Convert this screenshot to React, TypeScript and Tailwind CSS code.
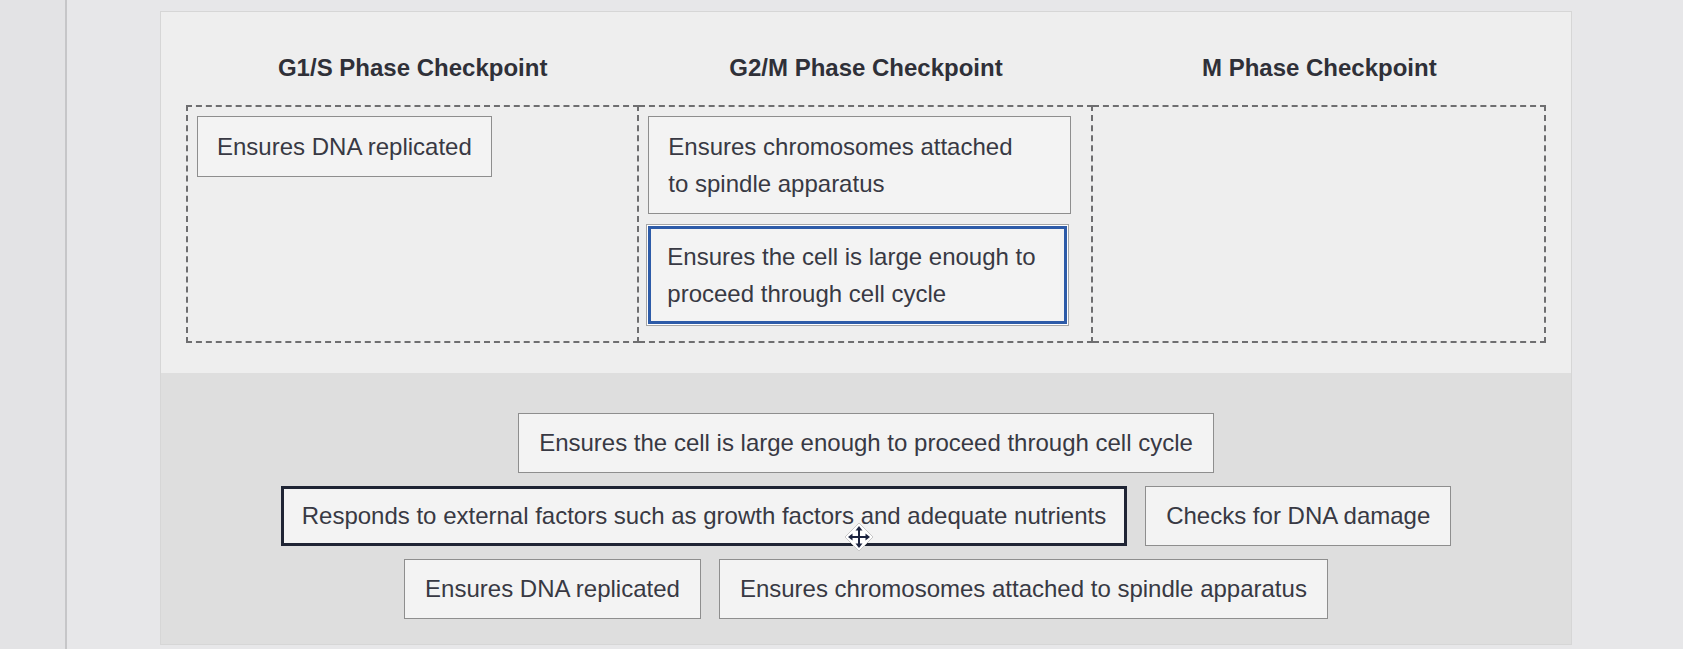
import React from 'react'

type Column = {
  title: string
  items: { lines: string[]; focused?: boolean }[]
}

const columns: Column[] = [
  { title: 'G1/S Phase Checkpoint', items: [{ lines: ['Ensures DNA replicated'] }] },
  {
    title: 'G2/M Phase Checkpoint',
    items: [
      { lines: ['Ensures chromosomes attached', 'to spindle apparatus'] },
      { lines: ['Ensures the cell is large enough to', 'proceed through cell cycle'], focused: true },
    ],
  },
  { title: 'M Phase Checkpoint', items: [] },
]

// answer bank, laid out row by row as the drag list renders it
const bankRows: { label: string; grabbed?: boolean }[][] = [
  [{ label: 'Ensures the cell is large enough to proceed through cell cycle' }],
  [
    { label: 'Responds to external factors such as growth factors and adequate nutrients', grabbed: true },
    { label: 'Checks for DNA damage' },
  ],
  [{ label: 'Ensures DNA replicated' }, { label: 'Ensures chromosomes attached to spindle apparatus' }],
]

function MoveCursor() {
  return (
    <svg width="30" height="30" viewBox="0 0 30 30" className="absolute left-[844px] top-[522px]">
      <polygon points="15,1 29,15 15,29 1,15" fill="#ffffff" stroke="#c8c8c8" strokeWidth="1" />
      <g fill="#1d2440" stroke="#1d2440" strokeWidth="2" strokeLinecap="round">
        <line x1="15" y1="7" x2="15" y2="23" />
        <line x1="7" y1="15" x2="23" y2="15" />
      </g>
      <g fill="#1d2440">
        <polygon points="15,4 11.5,8.5 18.5,8.5" />
        <polygon points="15,26 11.5,21.5 18.5,21.5" />
        <polygon points="4,15 8.5,11.5 8.5,18.5" />
        <polygon points="26,15 21.5,11.5 21.5,18.5" />
      </g>
    </svg>
  )
}

export default function App() {
  return (
    <div
      className="relative flex h-[649px] w-full overflow-hidden bg-[#e7e7e9] text-[#383943]"
      style={{ fontFamily: '"Liberation Sans", Arial, sans-serif' }}
    >
      <div className="h-full w-[67px] shrink-0 border-r-2 border-[#c6c6c8] bg-[#e3e3e5]" />

      <div className="ml-[93px] mt-[11px] flex h-[634px] w-[1412px] flex-col border border-[#d6d6d6] bg-[#eeeeee]">
        <div className="grid grid-cols-3 px-[25px] pt-[41px]">
          {columns.map((col) => (
            <h3 key={col.title} className="text-center text-[24px] font-bold leading-[30px] text-[#2f3038]">
              {col.title}
            </h3>
          ))}
        </div>

        <div className="mt-[22px] grid grid-cols-3 px-[25px]">
          {columns.map((col, i) => (
            <div
              key={col.title}
              className={`flex h-[238px] flex-col items-start gap-[12px] border-2 border-dashed border-[#6e6e70] p-[9px] ${
                i > 0 ? 'border-l-0' : ''
              }`}
            >
              {col.items.map((item) => (
                <div
                  key={item.lines[0]}
                  className={
                    item.focused
                      ? 'w-[419px] border-[3px] border-[#2d5ba8] bg-[#f3f3f3] px-[16px] py-[9px] text-[24px] leading-[37px] ring-1 ring-[#a6a6a6] ring-offset-1'
                      : `border border-[#8e8e8e] bg-[#f3f3f3] px-[19px] py-[11px] text-[24px] leading-[37px] ${
                          item.lines.length > 1 ? 'w-[423px]' : ''
                        }`
                  }
                >
                  {item.lines.map((line) => (
                    <div key={line} className="whitespace-nowrap">
                      {line}
                    </div>
                  ))}
                </div>
              ))}
            </div>
          ))}
        </div>

        <div className="mt-[30px] flex flex-1 flex-col items-center gap-[13px] bg-[#dedede] pt-[40px]">
          {bankRows.map((row, r) => (
            <div key={r} className="flex justify-center gap-[18px]">
              {row.map((card) => (
                <div
                  key={card.label}
                  className={`whitespace-nowrap bg-[#f3f3f3] text-[24px] leading-[36px] ${
                    card.grabbed
                      ? 'border-[3px] border-[#1f2434] px-[18px] py-[9px]'
                      : 'border border-[#8e8e8e] px-[20px] py-[11px]'
                  }`}
                >
                  {card.label}
                </div>
              ))}
            </div>
          ))}
        </div>
      </div>

      <MoveCursor />
    </div>
  )
}
